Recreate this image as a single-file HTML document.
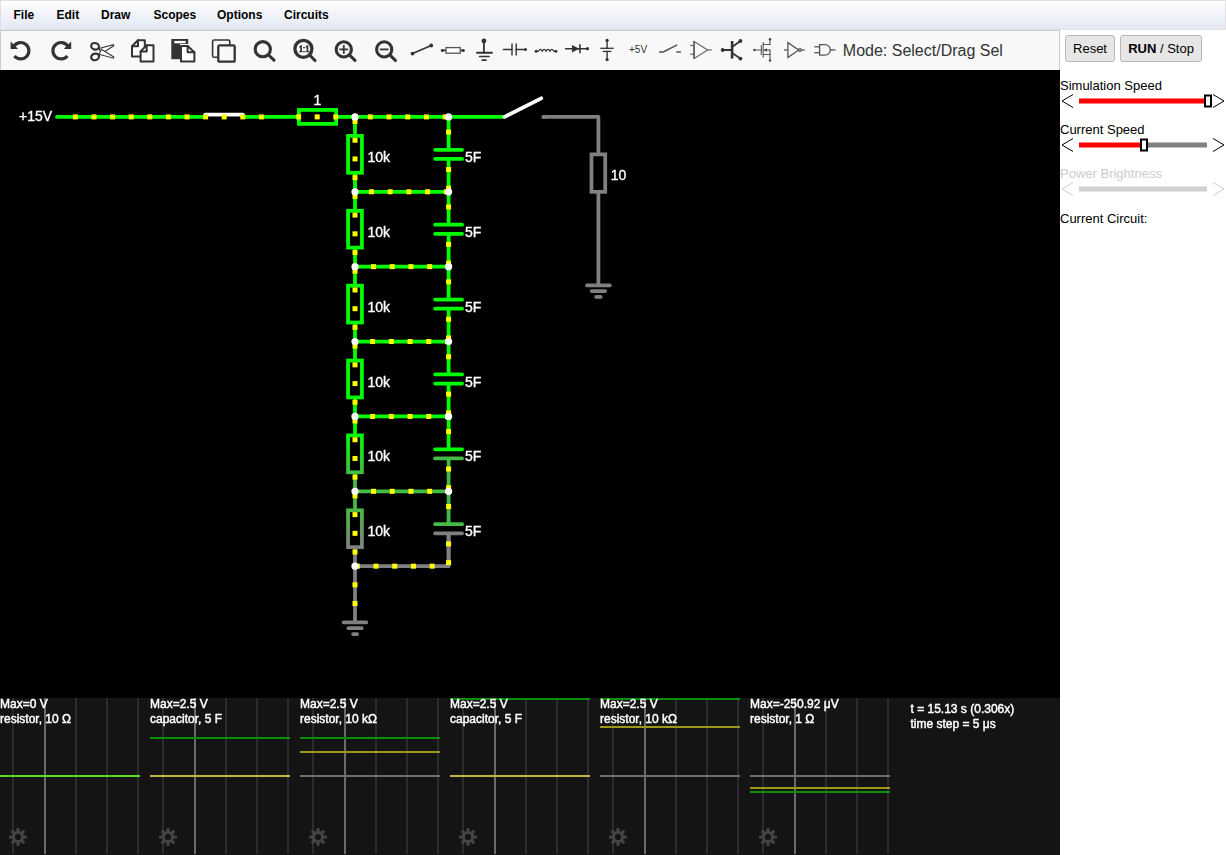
<!DOCTYPE html>
<html><head><meta charset="utf-8">
<style>
html,body{margin:0;padding:0;}
body{width:1226px;height:855px;overflow:hidden;position:relative;background:#fff;font-family:"Liberation Sans",sans-serif;}
#menu{position:absolute;left:0;top:0;width:1226px;height:30px;box-sizing:border-box;border:1px solid #e0e0e0;background:linear-gradient(#fefefe,#e3e8f3);}
#menu span{position:absolute;top:7px;font-size:12px;font-weight:bold;color:#000;line-height:14px;}
#toolbar{position:absolute;left:0;top:30px;width:1060px;height:40px;box-sizing:border-box;border:1px solid #cccccc;border-bottom:none;background:#f8f8f8;}
#canvas{position:absolute;left:0;top:70px;width:1060px;height:785px;background:#000;overflow:hidden;will-change:transform;}
#panel{position:absolute;left:1060px;top:30px;width:166px;height:825px;background:#fff;}
.btn{position:absolute;top:5px;height:27px;box-sizing:border-box;border:1px solid #b8b8b8;border-radius:3px;background:#e6e6e6;font-size:13px;color:#000;line-height:25px;text-align:center;}
.lbl{position:absolute;left:0px;font-size:13px;color:#000;line-height:15px;white-space:nowrap;}
</style></head><body>
<div id="menu">
<span style="left:12.5px">File</span><span style="left:55.5px">Edit</span><span style="left:100px">Draw</span><span style="left:152.5px">Scopes</span><span style="left:216px">Options</span><span style="left:283px">Circuits</span>
</div>
<div id="toolbar"><svg width="1060" height="40" style="position:absolute;left:-1px;top:-1px" font-family="Liberation Sans, sans-serif">
<g transform="translate(0,-30)" fill="none" stroke="#333" stroke-linecap="round">
<!-- undo -->
<g id="undo">
<path d="M14.0,46.0 A8.2,8.2 0 1 1 14.42,55.97" stroke-width="3.2" stroke-linecap="butt"/>
<polygon points="10.6,41.4 10.6,48.9 18.1,48.9" fill="#333" stroke="none"/>
</g>
<!-- redo -->
<g transform="translate(81.8,0) scale(-1,1)">
<path d="M14.0,46.0 A8.2,8.2 0 1 1 14.42,55.97" stroke-width="3.2" stroke-linecap="butt"/>
<polygon points="10.6,41.4 10.6,48.9 18.1,48.9" fill="#333" stroke="none"/>
</g>
<!-- scissors -->
<g stroke-width="2.2">
<ellipse cx="95.1" cy="46.3" rx="4" ry="3.2" transform="rotate(18 95.1 46.3)"/>
<ellipse cx="95.1" cy="56.9" rx="4" ry="3.2" transform="rotate(-18 95.1 56.9)"/>
</g>
<g stroke-width="1.1" fill="#fff">
<path d="M99,48.5 L113.4,44.6 L113.8,45.8 L101.5,53.6 Z"/>
<path d="M99,54.3 L113.4,58.2 L113.8,57 L101.5,49.2 Z"/>
</g>
<!-- copy -->
<g stroke-width="2" stroke-linejoin="round" fill="#fff">
<path d="M138,40.2 L144.8,40.2 L144.8,56.4 L132,56.4 L132,46.2 Z"/>
<path d="M132,46.2 L138,46.2 L138,40.2" fill="none"/>
<path d="M146.7,45.3 L153.5,45.3 L153.5,61.6 L140.6,61.6 L140.6,51.4 Z"/>
<path d="M140.6,51.4 L146.7,51.4 L146.7,45.3" fill="none"/>
</g>
<!-- paste -->
<g stroke-linejoin="round">
<rect x="171.3" y="39" width="16.9" height="20.2" fill="#333" stroke="none"/>
<rect x="174.3" y="40.9" width="11.4" height="2.4" fill="#fff" stroke="none"/>
<path d="M180,44 L188.5,44 L196,51.4 L196,63 L180,63 Z" fill="#fff" stroke="none"/>
<path d="M181,46 L187.6,46 L194.4,52.2 L194.4,61.6 L181,61.6 Z" fill="#fff" stroke="#333" stroke-width="2"/>
<path d="M187.6,46 L187.6,52.2 L194.4,52.2" stroke-width="2" fill="none"/>
</g>
<!-- duplicate -->
<g stroke-linejoin="round">
<rect x="212.6" y="40" width="17.2" height="17.2" rx="1.5" stroke-width="1.6"/>
<rect x="218.3" y="45.3" width="16.4" height="16.4" rx="1.5" stroke-width="2.3" fill="#f8f8f8"/>
</g>
<!-- search -->
<g stroke-width="3.1">
<circle cx="262.8" cy="49.2" r="7.6"/><line x1="268.6" y1="55" x2="274" y2="60.2"/>
<circle cx="303.4" cy="48.8" r="8.5" stroke-width="3.3"/><line x1="309.6" y1="55" x2="315" y2="60.5"/>
<circle cx="343.8" cy="49.4" r="7.6"/><line x1="349.6" y1="55.2" x2="355" y2="60.4"/>
<circle cx="384.2" cy="49.4" r="7.6"/><line x1="390" y1="55.2" x2="395.4" y2="60.4"/>
</g>
<g fill="#333" stroke="none">
<path d="M298.9,46.9 L300.6,45.3 L301.9,45.3 L301.9,51.3 L302.8,51.3 L302.8,52.3 L299.1,52.3 L299.1,51.3 L300.2,51.3 L300.2,47.1 L299.3,47.8 Z"/>
<circle cx="304" cy="47.6" r="0.85"/><circle cx="304" cy="51.5" r="0.85"/>
<path d="M305.3,46.9 L307,45.3 L308.3,45.3 L308.3,51.3 L309.2,51.3 L309.2,52.3 L305.5,52.3 L305.5,51.3 L306.6,51.3 L306.6,47.1 L305.7,47.8 Z"/>
</g>
<g stroke-width="1.8" stroke-linecap="butt">
<line x1="339.4" y1="49.4" x2="348.2" y2="49.4"/><line x1="343.8" y1="45" x2="343.8" y2="53.8"/>
<line x1="379.8" y1="49.4" x2="388.6" y2="49.4"/>
</g>
<!-- small component icons -->
<g stroke-width="1.6" fill="#333">
<!-- wire -->
<line x1="412.5" y1="53.6" x2="431.2" y2="45.5"/>
<circle cx="412.5" cy="53.6" r="1.9" stroke="none"/><circle cx="431.2" cy="45.5" r="1.9" stroke="none"/>
<!-- resistor -->
<line x1="442.3" y1="50.4" x2="445.8" y2="50.4"/><line x1="460.4" y1="50.4" x2="463.3" y2="50.4"/>
<rect x="446" y="47.6" width="14.2" height="5.6" fill="#fff" stroke="#555" stroke-width="1.3"/>
<circle cx="442.3" cy="50.4" r="1.5" stroke="none"/><circle cx="463.3" cy="50.4" r="1.5" stroke="none"/>
<!-- ground -->
<circle cx="483.9" cy="41" r="2.4" stroke="none"/>
<line x1="483.9" y1="41" x2="483.9" y2="52.8" stroke-width="1.8"/>
<line x1="477" y1="52.8" x2="492" y2="52.8" stroke-width="1.9"/>
<line x1="479.6" y1="56.5" x2="489" y2="56.5" stroke-width="1.7"/>
<line x1="482.3" y1="60.1" x2="486" y2="60.1" stroke-width="1.7"/>
<!-- capacitor -->
<line x1="503.5" y1="49.5" x2="512" y2="49.5"/><line x1="516.2" y1="49.5" x2="525.5" y2="49.5"/>
<line x1="512" y1="43.6" x2="512" y2="55.6" stroke-width="1.4" stroke-linecap="butt"/><line x1="516.2" y1="43.6" x2="516.2" y2="55.6" stroke-width="1.4" stroke-linecap="butt"/>
<circle cx="525.5" cy="49.5" r="1.5" stroke="none"/>
<!-- inductor -->
<path d="M536.1,51.2 L538.5,51.2 Q540.4,47.6 542.3,51.2 Q544.2,47.6 546.1,51.2 Q548,47.6 549.9,51.2 Q551.8,47.6 553.7,51.2 L555.9,51.2" fill="none" stroke-width="1.3"/>
<circle cx="536.1" cy="51.2" r="1.5" stroke="none"/><circle cx="555.9" cy="51.2" r="1.5" stroke="none"/>
<!-- diode -->
<line x1="565.5" y1="48.7" x2="587.5" y2="48.7" stroke-width="1.4"/>
<polygon points="572,45 572,52.6 579.2,48.7" stroke="none"/>
<line x1="579.9" y1="44.3" x2="579.9" y2="53.2" stroke-width="1.6" stroke-linecap="butt"/>
<circle cx="587.5" cy="48.7" r="1.6" stroke="none"/>
<!-- battery -->
<line x1="607.1" y1="40.3" x2="607.1" y2="48.3" stroke-width="1.4"/><line x1="607.1" y1="51.4" x2="607.1" y2="59.6" stroke-width="1.4"/>
<line x1="600.3" y1="48.3" x2="613.7" y2="48.3" stroke-width="1.3" stroke-linecap="butt"/>
<line x1="602.7" y1="51.4" x2="611.4" y2="51.4" stroke-width="1.3" stroke-linecap="butt"/>
<circle cx="607.1" cy="40.3" r="1.6" stroke="none"/><circle cx="607.1" cy="59.6" r="1.6" stroke="none"/>
</g>
<text x="629" y="52.8" font-size="10" fill="#333" stroke="none">+5V</text>
<g stroke="#555" stroke-width="1.5" stroke-linecap="butt">
<!-- switch -->
<line x1="659" y1="52" x2="663.4" y2="52"/><line x1="663.2" y1="52" x2="677.2" y2="44.9"/><line x1="676.3" y1="52" x2="680.9" y2="52"/>
</g>
<g stroke="#666" stroke-width="1.2" stroke-linecap="butt" fill="none">
<!-- opamp -->
<polygon points="694.2,41.5 694.2,58.4 707.6,49.9"/>
<line x1="690.1" y1="45.5" x2="694.2" y2="45.5"/><line x1="690.1" y1="54.2" x2="694.2" y2="54.2"/><line x1="707.6" y1="49.9" x2="711.8" y2="49.9"/>
<line x1="694" y1="41.2" x2="694" y2="58.6" stroke-width="1.8"/>
</g>
<g stroke="#333" fill="#333">
<!-- transistor -->
<line x1="722.6" y1="50" x2="732.1" y2="50" stroke-width="1.8"/>
<line x1="732.1" y1="41" x2="732.1" y2="58.6" stroke-width="2.6" stroke-linecap="butt"/>
<line x1="732.1" y1="47" x2="740.4" y2="41" stroke-width="1.8"/>
<line x1="732.1" y1="53" x2="740.4" y2="58.6" stroke-width="1.8"/>
<circle cx="722.6" cy="50" r="1.9" stroke="none"/><circle cx="740.4" cy="41" r="1.9" stroke="none"/><circle cx="740.4" cy="58.6" r="1.9" stroke="none"/>
<!-- mosfet -->
<g stroke-width="1.1" fill="none" stroke="#555">
<line x1="754.4" y1="50" x2="761.3" y2="50"/>
<line x1="761.3" y1="45.5" x2="761.3" y2="54.5"/>
<line x1="763.2" y1="42.6" x2="763.2" y2="57.2"/>
<line x1="763.2" y1="44.5" x2="770" y2="44.5"/><line x1="770" y1="44.5" x2="770" y2="39.3"/>
<line x1="763.2" y1="50" x2="770" y2="50"/>
<line x1="763.2" y1="54.5" x2="770" y2="54.5"/><line x1="770" y1="54.5" x2="770" y2="60.6"/>
<line x1="770" y1="50" x2="770" y2="54.5"/>
</g>
<circle cx="754.4" cy="50" r="1.2" stroke="none" fill="#444"/><circle cx="770" cy="39.3" r="1.2" stroke="none" fill="#444"/><circle cx="770" cy="60.6" r="1.2" stroke="none" fill="#444"/>
<polygon points="764,50 767,48.3 767,51.7" stroke="none" fill="#444"/>
</g>
<g stroke="#555" stroke-width="1.3" fill="none" stroke-linecap="butt">
<!-- inverter -->
<line x1="784" y1="50" x2="787.9" y2="50"/>
<polygon points="787.9,42.6 787.9,57.6 798.6,50"/>
<circle cx="799.9" cy="50" r="1.4"/>
<line x1="801.3" y1="50" x2="804.8" y2="50"/>
<!-- and -->
<line x1="814.3" y1="46.8" x2="819.6" y2="46.8"/><line x1="814.3" y1="52.7" x2="819.6" y2="52.7"/>
<path d="M819.6,44.6 L825,44.6 A5.3,5.3 0 0 1 825,55.2 L819.6,55.2 Z"/>
<line x1="830.3" y1="49.9" x2="835.5" y2="49.9"/>
</g>
<text x="842.8" y="55.6" font-size="16" fill="#333" stroke="none">Mode: Select/Drag Sel</text>
</g>
</svg>
</div>
<div id="canvas"><svg width="1060" height="628" viewBox="0 70 1060 628" style="position:absolute;left:0;top:0" font-family="Liberation Sans, sans-serif"><defs><linearGradient id="g4" gradientUnits="userSpaceOnUse" x1="0" y1="433.56" x2="0" y2="474.16"><stop offset="0" stop-color="#00ff00"/><stop offset="1" stop-color="#44bb44"/></linearGradient><linearGradient id="g5" gradientUnits="userSpaceOnUse" x1="0" y1="508.44" x2="0" y2="549.04"><stop offset="0" stop-color="#44bb44"/><stop offset="1" stop-color="#808080"/></linearGradient></defs><line x1="57.00" y1="116.90" x2="205.20" y2="116.90" stroke="#00ff00" stroke-width="3.75" stroke-linecap="round"/>
<line x1="242.80" y1="116.90" x2="298.90" y2="116.90" stroke="#00ff00" stroke-width="3.75" stroke-linecap="butt"/>
<rect x="298.88" y="109.93" width="37.25" height="13.95" fill="none" stroke="#00ff00" stroke-width="3.75"/>
<line x1="336.10" y1="116.90" x2="504.60" y2="116.90" stroke="#00ff00" stroke-width="3.75" stroke-linecap="butt"/>
<path d="M205.2,116.9 L205.2,114.5 L242.8,114.5 L242.8,116.9" fill="none" stroke="#fff" stroke-width="3.75" stroke-linejoin="round" stroke-linecap="round"/>
<line x1="504.60" y1="116.90" x2="541.20" y2="98.30" stroke="#ffffff" stroke-width="3.75" stroke-linecap="round"/>
<path d="M543.2,116.9 L598.4,116.9 L598.4,154.4" fill="none" stroke="#808080" stroke-width="3.75" stroke-linejoin="round" stroke-linecap="butt"/>
<line x1="543.20" y1="116.90" x2="545.00" y2="116.90" stroke="#808080" stroke-width="3.75" stroke-linecap="round"/>
<rect x="591.48" y="154.38" width="13.75" height="37.45" fill="none" stroke="#808080" stroke-width="3.75"/>
<line x1="598.40" y1="191.80" x2="598.40" y2="285.30" stroke="#808080" stroke-width="3.75" stroke-linecap="butt"/>
<line x1="587.00" y1="285.30" x2="609.80" y2="285.30" stroke="#808080" stroke-width="3.75" stroke-linecap="round"/>
<line x1="591.70" y1="291.10" x2="605.10" y2="291.10" stroke="#808080" stroke-width="3.75" stroke-linecap="round"/>
<line x1="596.20" y1="296.90" x2="600.60" y2="296.90" stroke="#808080" stroke-width="3.75" stroke-linecap="round"/>
<text x="610.80" y="180.00" font-size="14" fill="#fff" stroke="#fff" stroke-width="0.35" text-anchor="start">10</text>
<text x="317.50" y="104.70" font-size="14" fill="#fff" stroke="#fff" stroke-width="0.35" text-anchor="middle">1</text>
<text x="19.00" y="120.90" font-size="14" fill="#fff" stroke="#fff" stroke-width="0.35" text-anchor="start">+15V</text>
<line x1="355.00" y1="116.90" x2="355.00" y2="135.94" stroke="#00ff00" stroke-width="3.75" stroke-linecap="butt"/>
<line x1="355.00" y1="172.74" x2="355.00" y2="191.78" stroke="#00ff00" stroke-width="3.75" stroke-linecap="butt"/>
<rect x="348.07" y="135.91" width="13.85" height="36.85" fill="none" stroke="#00ff00" stroke-width="3.75"/>
<text x="367.50" y="161.94" font-size="14" fill="#fff" stroke="#fff" stroke-width="0.35" text-anchor="start">10k</text>
<line x1="448.60" y1="116.90" x2="448.60" y2="149.79" stroke="#00ff00" stroke-width="3.75" stroke-linecap="butt"/>
<line x1="448.60" y1="158.89" x2="448.60" y2="191.78" stroke="#00ff00" stroke-width="3.75" stroke-linecap="butt"/>
<line x1="435.10" y1="149.79" x2="462.10" y2="149.79" stroke="#00ff00" stroke-width="3.75" stroke-linecap="round"/>
<line x1="435.10" y1="158.89" x2="462.10" y2="158.89" stroke="#00ff00" stroke-width="3.75" stroke-linecap="round"/>
<text x="464.90" y="161.94" font-size="14" fill="#fff" stroke="#fff" stroke-width="0.35" text-anchor="start">5F</text>
<line x1="355.00" y1="191.78" x2="355.00" y2="210.82" stroke="#00ff00" stroke-width="3.75" stroke-linecap="butt"/>
<line x1="355.00" y1="247.62" x2="355.00" y2="266.66" stroke="#00ff00" stroke-width="3.75" stroke-linecap="butt"/>
<rect x="348.07" y="210.79" width="13.85" height="36.85" fill="none" stroke="#00ff00" stroke-width="3.75"/>
<text x="367.50" y="236.82" font-size="14" fill="#fff" stroke="#fff" stroke-width="0.35" text-anchor="start">10k</text>
<line x1="448.60" y1="191.78" x2="448.60" y2="224.67" stroke="#00ff00" stroke-width="3.75" stroke-linecap="butt"/>
<line x1="448.60" y1="233.77" x2="448.60" y2="266.66" stroke="#00ff00" stroke-width="3.75" stroke-linecap="butt"/>
<line x1="435.10" y1="224.67" x2="462.10" y2="224.67" stroke="#00ff00" stroke-width="3.75" stroke-linecap="round"/>
<line x1="435.10" y1="233.77" x2="462.10" y2="233.77" stroke="#00ff00" stroke-width="3.75" stroke-linecap="round"/>
<text x="464.90" y="236.82" font-size="14" fill="#fff" stroke="#fff" stroke-width="0.35" text-anchor="start">5F</text>
<line x1="355.00" y1="266.66" x2="355.00" y2="285.70" stroke="#00ff00" stroke-width="3.75" stroke-linecap="butt"/>
<line x1="355.00" y1="322.50" x2="355.00" y2="341.54" stroke="#00ff00" stroke-width="3.75" stroke-linecap="butt"/>
<rect x="348.07" y="285.67" width="13.85" height="36.85" fill="none" stroke="#00ff00" stroke-width="3.75"/>
<text x="367.50" y="311.70" font-size="14" fill="#fff" stroke="#fff" stroke-width="0.35" text-anchor="start">10k</text>
<line x1="448.60" y1="266.66" x2="448.60" y2="299.55" stroke="#00ff00" stroke-width="3.75" stroke-linecap="butt"/>
<line x1="448.60" y1="308.65" x2="448.60" y2="341.54" stroke="#00ff00" stroke-width="3.75" stroke-linecap="butt"/>
<line x1="435.10" y1="299.55" x2="462.10" y2="299.55" stroke="#00ff00" stroke-width="3.75" stroke-linecap="round"/>
<line x1="435.10" y1="308.65" x2="462.10" y2="308.65" stroke="#00ff00" stroke-width="3.75" stroke-linecap="round"/>
<text x="464.90" y="311.70" font-size="14" fill="#fff" stroke="#fff" stroke-width="0.35" text-anchor="start">5F</text>
<line x1="355.00" y1="341.54" x2="355.00" y2="360.58" stroke="#00ff00" stroke-width="3.75" stroke-linecap="butt"/>
<line x1="355.00" y1="397.38" x2="355.00" y2="416.42" stroke="#00ff00" stroke-width="3.75" stroke-linecap="butt"/>
<rect x="348.07" y="360.55" width="13.85" height="36.85" fill="none" stroke="#00ff00" stroke-width="3.75"/>
<text x="367.50" y="386.58" font-size="14" fill="#fff" stroke="#fff" stroke-width="0.35" text-anchor="start">10k</text>
<line x1="448.60" y1="341.54" x2="448.60" y2="374.43" stroke="#00ff00" stroke-width="3.75" stroke-linecap="butt"/>
<line x1="448.60" y1="383.53" x2="448.60" y2="416.42" stroke="#00ff00" stroke-width="3.75" stroke-linecap="butt"/>
<line x1="435.10" y1="374.43" x2="462.10" y2="374.43" stroke="#00ff00" stroke-width="3.75" stroke-linecap="round"/>
<line x1="435.10" y1="383.53" x2="462.10" y2="383.53" stroke="#00ff00" stroke-width="3.75" stroke-linecap="round"/>
<text x="464.90" y="386.58" font-size="14" fill="#fff" stroke="#fff" stroke-width="0.35" text-anchor="start">5F</text>
<line x1="355.00" y1="416.42" x2="355.00" y2="435.46" stroke="#00ff00" stroke-width="3.75" stroke-linecap="butt"/>
<line x1="355.00" y1="472.26" x2="355.00" y2="491.30" stroke="#44bb44" stroke-width="3.75" stroke-linecap="butt"/>
<rect x="348.07" y="435.43" width="13.85" height="36.85" fill="none" stroke="url(#g4)" stroke-width="3.75"/>
<text x="367.50" y="461.46" font-size="14" fill="#fff" stroke="#fff" stroke-width="0.35" text-anchor="start">10k</text>
<line x1="448.60" y1="416.42" x2="448.60" y2="449.31" stroke="#00ff00" stroke-width="3.75" stroke-linecap="butt"/>
<line x1="448.60" y1="458.41" x2="448.60" y2="491.30" stroke="#44bb44" stroke-width="3.75" stroke-linecap="butt"/>
<line x1="435.10" y1="449.31" x2="462.10" y2="449.31" stroke="#00ff00" stroke-width="3.75" stroke-linecap="round"/>
<line x1="435.10" y1="458.41" x2="462.10" y2="458.41" stroke="#44bb44" stroke-width="3.75" stroke-linecap="round"/>
<text x="464.90" y="461.46" font-size="14" fill="#fff" stroke="#fff" stroke-width="0.35" text-anchor="start">5F</text>
<line x1="355.00" y1="491.30" x2="355.00" y2="510.34" stroke="#44bb44" stroke-width="3.75" stroke-linecap="butt"/>
<line x1="355.00" y1="547.14" x2="355.00" y2="566.18" stroke="#808080" stroke-width="3.75" stroke-linecap="butt"/>
<rect x="348.07" y="510.31" width="13.85" height="36.85" fill="none" stroke="url(#g5)" stroke-width="3.75"/>
<text x="367.50" y="536.34" font-size="14" fill="#fff" stroke="#fff" stroke-width="0.35" text-anchor="start">10k</text>
<line x1="448.60" y1="491.30" x2="448.60" y2="524.19" stroke="#44bb44" stroke-width="3.75" stroke-linecap="butt"/>
<line x1="448.60" y1="533.29" x2="448.60" y2="566.18" stroke="#808080" stroke-width="3.75" stroke-linecap="butt"/>
<line x1="435.10" y1="524.19" x2="462.10" y2="524.19" stroke="#44bb44" stroke-width="3.75" stroke-linecap="round"/>
<line x1="435.10" y1="533.29" x2="462.10" y2="533.29" stroke="#808080" stroke-width="3.75" stroke-linecap="round"/>
<text x="464.90" y="536.34" font-size="14" fill="#fff" stroke="#fff" stroke-width="0.35" text-anchor="start">5F</text>
<line x1="355.00" y1="191.78" x2="448.60" y2="191.78" stroke="#00ff00" stroke-width="3.75" stroke-linecap="butt"/>
<line x1="355.00" y1="266.66" x2="448.60" y2="266.66" stroke="#00ff00" stroke-width="3.75" stroke-linecap="butt"/>
<line x1="355.00" y1="341.54" x2="448.60" y2="341.54" stroke="#00ff00" stroke-width="3.75" stroke-linecap="butt"/>
<line x1="355.00" y1="416.42" x2="448.60" y2="416.42" stroke="#00ff00" stroke-width="3.75" stroke-linecap="butt"/>
<line x1="355.00" y1="491.30" x2="448.60" y2="491.30" stroke="#44bb44" stroke-width="3.75" stroke-linecap="butt"/>
<path d="M355.0,566.18 L448.6,566.18 L448.6,533.29" fill="none" stroke="#808080" stroke-width="3.75" stroke-linejoin="round"/>
<line x1="355.00" y1="566.18" x2="355.00" y2="622.40" stroke="#808080" stroke-width="3.75" stroke-linecap="butt"/>
<line x1="343.70" y1="622.40" x2="366.30" y2="622.40" stroke="#808080" stroke-width="3.75" stroke-linecap="round"/>
<line x1="348.40" y1="628.20" x2="361.70" y2="628.20" stroke="#808080" stroke-width="3.75" stroke-linecap="round"/>
<line x1="353.10" y1="634.00" x2="357.10" y2="634.00" stroke="#808080" stroke-width="3.75" stroke-linecap="round"/>
<rect x="72.90" y="114.40" width="5" height="5" fill="#ffff00"/>
<rect x="91.50" y="114.40" width="5" height="5" fill="#ffff00"/>
<rect x="110.10" y="114.40" width="5" height="5" fill="#ffff00"/>
<rect x="128.70" y="114.40" width="5" height="5" fill="#ffff00"/>
<rect x="147.30" y="114.40" width="5" height="5" fill="#ffff00"/>
<rect x="165.90" y="114.40" width="5" height="5" fill="#ffff00"/>
<rect x="184.50" y="114.40" width="5" height="5" fill="#ffff00"/>
<rect x="203.10" y="114.40" width="5" height="5" fill="#ffff00"/>
<rect x="221.70" y="114.40" width="5" height="5" fill="#ffff00"/>
<rect x="240.30" y="114.40" width="5" height="5" fill="#ffff00"/>
<rect x="258.90" y="114.40" width="5" height="5" fill="#ffff00"/>
<rect x="296.10" y="114.40" width="5" height="5" fill="#ffff00"/>
<rect x="314.70" y="114.40" width="5" height="5" fill="#ffff00"/>
<rect x="333.30" y="114.40" width="5" height="5" fill="#ffff00"/>
<rect x="367.80" y="114.40" width="5" height="5" fill="#ffff00"/>
<rect x="386.52" y="114.40" width="5" height="5" fill="#ffff00"/>
<rect x="405.24" y="114.40" width="5" height="5" fill="#ffff00"/>
<rect x="423.96" y="114.40" width="5" height="5" fill="#ffff00"/>
<rect x="442.68" y="114.40" width="5" height="5" fill="#ffff00"/>
<rect x="368.90" y="189.28" width="5" height="5" fill="#ffff00"/>
<rect x="387.62" y="189.28" width="5" height="5" fill="#ffff00"/>
<rect x="406.34" y="189.28" width="5" height="5" fill="#ffff00"/>
<rect x="425.06" y="189.28" width="5" height="5" fill="#ffff00"/>
<rect x="443.78" y="189.28" width="5" height="5" fill="#ffff00"/>
<rect x="371.00" y="264.16" width="5" height="5" fill="#ffff00"/>
<rect x="389.72" y="264.16" width="5" height="5" fill="#ffff00"/>
<rect x="408.44" y="264.16" width="5" height="5" fill="#ffff00"/>
<rect x="427.16" y="264.16" width="5" height="5" fill="#ffff00"/>
<rect x="445.88" y="264.16" width="5" height="5" fill="#ffff00"/>
<rect x="370.10" y="339.04" width="5" height="5" fill="#ffff00"/>
<rect x="388.82" y="339.04" width="5" height="5" fill="#ffff00"/>
<rect x="407.54" y="339.04" width="5" height="5" fill="#ffff00"/>
<rect x="426.26" y="339.04" width="5" height="5" fill="#ffff00"/>
<rect x="444.98" y="339.04" width="5" height="5" fill="#ffff00"/>
<rect x="370.10" y="413.92" width="5" height="5" fill="#ffff00"/>
<rect x="388.82" y="413.92" width="5" height="5" fill="#ffff00"/>
<rect x="407.54" y="413.92" width="5" height="5" fill="#ffff00"/>
<rect x="426.26" y="413.92" width="5" height="5" fill="#ffff00"/>
<rect x="444.98" y="413.92" width="5" height="5" fill="#ffff00"/>
<rect x="371.00" y="488.80" width="5" height="5" fill="#ffff00"/>
<rect x="389.72" y="488.80" width="5" height="5" fill="#ffff00"/>
<rect x="408.44" y="488.80" width="5" height="5" fill="#ffff00"/>
<rect x="427.16" y="488.80" width="5" height="5" fill="#ffff00"/>
<rect x="445.88" y="488.80" width="5" height="5" fill="#ffff00"/>
<rect x="354.80" y="563.68" width="5" height="5" fill="#ffff00"/>
<rect x="373.52" y="563.68" width="5" height="5" fill="#ffff00"/>
<rect x="392.24" y="563.68" width="5" height="5" fill="#ffff00"/>
<rect x="410.96" y="563.68" width="5" height="5" fill="#ffff00"/>
<rect x="429.68" y="563.68" width="5" height="5" fill="#ffff00"/>
<rect x="352.50" y="119.00" width="5" height="5" fill="#ffff00"/>
<rect x="352.50" y="137.72" width="5" height="5" fill="#ffff00"/>
<rect x="352.50" y="156.44" width="5" height="5" fill="#ffff00"/>
<rect x="352.50" y="175.16" width="5" height="5" fill="#ffff00"/>
<rect x="446.10" y="129.60" width="5" height="5" fill="#ffff00"/>
<rect x="446.10" y="167.00" width="5" height="5" fill="#ffff00"/>
<rect x="446.10" y="185.70" width="5" height="5" fill="#ffff00"/>
<rect x="352.50" y="193.88" width="5" height="5" fill="#ffff00"/>
<rect x="352.50" y="212.60" width="5" height="5" fill="#ffff00"/>
<rect x="352.50" y="231.32" width="5" height="5" fill="#ffff00"/>
<rect x="352.50" y="250.04" width="5" height="5" fill="#ffff00"/>
<rect x="446.10" y="204.48" width="5" height="5" fill="#ffff00"/>
<rect x="446.10" y="241.88" width="5" height="5" fill="#ffff00"/>
<rect x="446.10" y="260.58" width="5" height="5" fill="#ffff00"/>
<rect x="352.50" y="268.76" width="5" height="5" fill="#ffff00"/>
<rect x="352.50" y="287.48" width="5" height="5" fill="#ffff00"/>
<rect x="352.50" y="306.20" width="5" height="5" fill="#ffff00"/>
<rect x="352.50" y="324.92" width="5" height="5" fill="#ffff00"/>
<rect x="446.10" y="279.36" width="5" height="5" fill="#ffff00"/>
<rect x="446.10" y="316.76" width="5" height="5" fill="#ffff00"/>
<rect x="446.10" y="335.46" width="5" height="5" fill="#ffff00"/>
<rect x="352.50" y="343.64" width="5" height="5" fill="#ffff00"/>
<rect x="352.50" y="362.36" width="5" height="5" fill="#ffff00"/>
<rect x="352.50" y="381.08" width="5" height="5" fill="#ffff00"/>
<rect x="352.50" y="399.80" width="5" height="5" fill="#ffff00"/>
<rect x="446.10" y="354.24" width="5" height="5" fill="#ffff00"/>
<rect x="446.10" y="391.64" width="5" height="5" fill="#ffff00"/>
<rect x="446.10" y="410.34" width="5" height="5" fill="#ffff00"/>
<rect x="352.50" y="418.52" width="5" height="5" fill="#ffff00"/>
<rect x="352.50" y="437.24" width="5" height="5" fill="#ffff00"/>
<rect x="352.50" y="455.96" width="5" height="5" fill="#ffff00"/>
<rect x="352.50" y="474.68" width="5" height="5" fill="#ffff00"/>
<rect x="446.10" y="429.12" width="5" height="5" fill="#ffff00"/>
<rect x="446.10" y="466.52" width="5" height="5" fill="#ffff00"/>
<rect x="446.10" y="485.22" width="5" height="5" fill="#ffff00"/>
<rect x="352.50" y="493.40" width="5" height="5" fill="#ffff00"/>
<rect x="352.50" y="512.12" width="5" height="5" fill="#ffff00"/>
<rect x="352.50" y="530.84" width="5" height="5" fill="#ffff00"/>
<rect x="352.50" y="549.56" width="5" height="5" fill="#ffff00"/>
<rect x="446.10" y="504.00" width="5" height="5" fill="#ffff00"/>
<rect x="446.10" y="541.40" width="5" height="5" fill="#ffff00"/>
<rect x="446.10" y="560.10" width="5" height="5" fill="#ffff00"/>
<rect x="352.50" y="582.30" width="5" height="5" fill="#ffff00"/>
<rect x="352.50" y="601.00" width="5" height="5" fill="#ffff00"/>
<circle cx="355.00" cy="116.90" r="3.6" fill="#fff"/>
<circle cx="355.00" cy="191.78" r="3.6" fill="#fff"/>
<circle cx="355.00" cy="266.66" r="3.6" fill="#fff"/>
<circle cx="355.00" cy="341.54" r="3.6" fill="#fff"/>
<circle cx="355.00" cy="416.42" r="3.6" fill="#fff"/>
<circle cx="355.00" cy="491.30" r="3.6" fill="#fff"/>
<circle cx="355.00" cy="566.18" r="3.6" fill="#fff"/>
<circle cx="448.60" cy="116.90" r="3.6" fill="#fff"/>
<circle cx="448.60" cy="191.78" r="3.6" fill="#fff"/>
<circle cx="448.60" cy="266.66" r="3.6" fill="#fff"/>
<circle cx="448.60" cy="341.54" r="3.6" fill="#fff"/>
<circle cx="448.60" cy="416.42" r="3.6" fill="#fff"/>
<circle cx="448.60" cy="491.30" r="3.6" fill="#fff"/></svg><svg width="1060" height="157" style="position:absolute;left:0;top:628px" font-family="Liberation Sans, sans-serif"><rect x="0" y="0" width="1060" height="157" fill="#141414"/><rect x="12" y="0" width="2" height="156" fill="#2c2c2c"/><rect x="44" y="0" width="2" height="156" fill="#6a6a6a"/><rect x="75" y="0" width="2" height="156" fill="#2c2c2c"/><rect x="106" y="0" width="2" height="156" fill="#2c2c2c"/><rect x="137" y="0" width="2" height="156" fill="#2c2c2c"/><rect x="162" y="0" width="2" height="156" fill="#2c2c2c"/><rect x="194" y="0" width="2" height="156" fill="#6a6a6a"/><rect x="225" y="0" width="2" height="156" fill="#2c2c2c"/><rect x="256" y="0" width="2" height="156" fill="#2c2c2c"/><rect x="287" y="0" width="2" height="156" fill="#2c2c2c"/><rect x="312" y="0" width="2" height="156" fill="#2c2c2c"/><rect x="344" y="0" width="2" height="156" fill="#6a6a6a"/><rect x="375" y="0" width="2" height="156" fill="#2c2c2c"/><rect x="406" y="0" width="2" height="156" fill="#2c2c2c"/><rect x="437" y="0" width="2" height="156" fill="#2c2c2c"/><rect x="462" y="0" width="2" height="156" fill="#2c2c2c"/><rect x="494" y="0" width="2" height="156" fill="#6a6a6a"/><rect x="525" y="0" width="2" height="156" fill="#2c2c2c"/><rect x="556" y="0" width="2" height="156" fill="#2c2c2c"/><rect x="587" y="0" width="2" height="156" fill="#2c2c2c"/><rect x="612" y="0" width="2" height="156" fill="#2c2c2c"/><rect x="644" y="0" width="2" height="156" fill="#6a6a6a"/><rect x="675" y="0" width="2" height="156" fill="#2c2c2c"/><rect x="706" y="0" width="2" height="156" fill="#2c2c2c"/><rect x="737" y="0" width="2" height="156" fill="#2c2c2c"/><rect x="762" y="0" width="2" height="156" fill="#2c2c2c"/><rect x="794" y="0" width="2" height="156" fill="#6a6a6a"/><rect x="825" y="0" width="2" height="156" fill="#2c2c2c"/><rect x="856" y="0" width="2" height="156" fill="#2c2c2c"/><rect x="887" y="0" width="2" height="156" fill="#2c2c2c"/><rect x="0" y="77" width="140" height="2" fill="#55dd22"/><rect x="150" y="39" width="140" height="2" fill="#0a8f0a"/><rect x="150" y="77" width="140" height="2" fill="#c0b840"/><rect x="300" y="39" width="140" height="2" fill="#0a8f0a"/><rect x="300" y="53" width="140" height="2" fill="#9c9818"/><rect x="300" y="77" width="140" height="2" fill="#6e6e6e"/><rect x="450" y="0" width="140" height="2" fill="#0a8f0a"/><rect x="450" y="77" width="140" height="2" fill="#c0b840"/><rect x="600" y="0" width="140" height="2" fill="#0a8f0a"/><rect x="600" y="28" width="140" height="2" fill="#9c9818"/><rect x="600" y="77" width="140" height="2" fill="#6e6e6e"/><rect x="750" y="77" width="140" height="2" fill="#6e6e6e"/><rect x="750" y="89" width="140" height="2" fill="#9c9818"/><rect x="750" y="93" width="140" height="2" fill="#0a8f0a"/><text x="0" y="9.799999999999955" font-size="12" fill="#fff" stroke="#fff" stroke-width="0.45">Max=0 V</text><text x="0" y="25" font-size="12" fill="#fff" stroke="#fff" stroke-width="0.45">resistor, 10 Ω</text><rect x="16.4" y="130" width="3.2" height="5" rx="1.2" fill="#444" transform="rotate(0 18 139)"/><rect x="16.4" y="130" width="3.2" height="5" rx="1.2" fill="#444" transform="rotate(45 18 139)"/><rect x="16.4" y="130" width="3.2" height="5" rx="1.2" fill="#444" transform="rotate(90 18 139)"/><rect x="16.4" y="130" width="3.2" height="5" rx="1.2" fill="#444" transform="rotate(135 18 139)"/><rect x="16.4" y="130" width="3.2" height="5" rx="1.2" fill="#444" transform="rotate(180 18 139)"/><rect x="16.4" y="130" width="3.2" height="5" rx="1.2" fill="#444" transform="rotate(225 18 139)"/><rect x="16.4" y="130" width="3.2" height="5" rx="1.2" fill="#444" transform="rotate(270 18 139)"/><rect x="16.4" y="130" width="3.2" height="5" rx="1.2" fill="#444" transform="rotate(315 18 139)"/><circle cx="18" cy="139" r="4.6" fill="none" stroke="#444" stroke-width="3"/><text x="150" y="9.799999999999955" font-size="12" fill="#fff" stroke="#fff" stroke-width="0.45">Max=2.5 V</text><text x="150" y="25" font-size="12" fill="#fff" stroke="#fff" stroke-width="0.45">capacitor, 5 F</text><rect x="166.4" y="130" width="3.2" height="5" rx="1.2" fill="#444" transform="rotate(0 168 139)"/><rect x="166.4" y="130" width="3.2" height="5" rx="1.2" fill="#444" transform="rotate(45 168 139)"/><rect x="166.4" y="130" width="3.2" height="5" rx="1.2" fill="#444" transform="rotate(90 168 139)"/><rect x="166.4" y="130" width="3.2" height="5" rx="1.2" fill="#444" transform="rotate(135 168 139)"/><rect x="166.4" y="130" width="3.2" height="5" rx="1.2" fill="#444" transform="rotate(180 168 139)"/><rect x="166.4" y="130" width="3.2" height="5" rx="1.2" fill="#444" transform="rotate(225 168 139)"/><rect x="166.4" y="130" width="3.2" height="5" rx="1.2" fill="#444" transform="rotate(270 168 139)"/><rect x="166.4" y="130" width="3.2" height="5" rx="1.2" fill="#444" transform="rotate(315 168 139)"/><circle cx="168" cy="139" r="4.6" fill="none" stroke="#444" stroke-width="3"/><text x="300" y="9.799999999999955" font-size="12" fill="#fff" stroke="#fff" stroke-width="0.45">Max=2.5 V</text><text x="300" y="25" font-size="12" fill="#fff" stroke="#fff" stroke-width="0.45">resistor, 10 kΩ</text><rect x="316.4" y="130" width="3.2" height="5" rx="1.2" fill="#444" transform="rotate(0 318 139)"/><rect x="316.4" y="130" width="3.2" height="5" rx="1.2" fill="#444" transform="rotate(45 318 139)"/><rect x="316.4" y="130" width="3.2" height="5" rx="1.2" fill="#444" transform="rotate(90 318 139)"/><rect x="316.4" y="130" width="3.2" height="5" rx="1.2" fill="#444" transform="rotate(135 318 139)"/><rect x="316.4" y="130" width="3.2" height="5" rx="1.2" fill="#444" transform="rotate(180 318 139)"/><rect x="316.4" y="130" width="3.2" height="5" rx="1.2" fill="#444" transform="rotate(225 318 139)"/><rect x="316.4" y="130" width="3.2" height="5" rx="1.2" fill="#444" transform="rotate(270 318 139)"/><rect x="316.4" y="130" width="3.2" height="5" rx="1.2" fill="#444" transform="rotate(315 318 139)"/><circle cx="318" cy="139" r="4.6" fill="none" stroke="#444" stroke-width="3"/><text x="450" y="9.799999999999955" font-size="12" fill="#fff" stroke="#fff" stroke-width="0.45">Max=2.5 V</text><text x="450" y="25" font-size="12" fill="#fff" stroke="#fff" stroke-width="0.45">capacitor, 5 F</text><rect x="466.4" y="130" width="3.2" height="5" rx="1.2" fill="#444" transform="rotate(0 468 139)"/><rect x="466.4" y="130" width="3.2" height="5" rx="1.2" fill="#444" transform="rotate(45 468 139)"/><rect x="466.4" y="130" width="3.2" height="5" rx="1.2" fill="#444" transform="rotate(90 468 139)"/><rect x="466.4" y="130" width="3.2" height="5" rx="1.2" fill="#444" transform="rotate(135 468 139)"/><rect x="466.4" y="130" width="3.2" height="5" rx="1.2" fill="#444" transform="rotate(180 468 139)"/><rect x="466.4" y="130" width="3.2" height="5" rx="1.2" fill="#444" transform="rotate(225 468 139)"/><rect x="466.4" y="130" width="3.2" height="5" rx="1.2" fill="#444" transform="rotate(270 468 139)"/><rect x="466.4" y="130" width="3.2" height="5" rx="1.2" fill="#444" transform="rotate(315 468 139)"/><circle cx="468" cy="139" r="4.6" fill="none" stroke="#444" stroke-width="3"/><text x="600" y="9.799999999999955" font-size="12" fill="#fff" stroke="#fff" stroke-width="0.45">Max=2.5 V</text><text x="600" y="25" font-size="12" fill="#fff" stroke="#fff" stroke-width="0.45">resistor, 10 kΩ</text><rect x="616.4" y="130" width="3.2" height="5" rx="1.2" fill="#444" transform="rotate(0 618 139)"/><rect x="616.4" y="130" width="3.2" height="5" rx="1.2" fill="#444" transform="rotate(45 618 139)"/><rect x="616.4" y="130" width="3.2" height="5" rx="1.2" fill="#444" transform="rotate(90 618 139)"/><rect x="616.4" y="130" width="3.2" height="5" rx="1.2" fill="#444" transform="rotate(135 618 139)"/><rect x="616.4" y="130" width="3.2" height="5" rx="1.2" fill="#444" transform="rotate(180 618 139)"/><rect x="616.4" y="130" width="3.2" height="5" rx="1.2" fill="#444" transform="rotate(225 618 139)"/><rect x="616.4" y="130" width="3.2" height="5" rx="1.2" fill="#444" transform="rotate(270 618 139)"/><rect x="616.4" y="130" width="3.2" height="5" rx="1.2" fill="#444" transform="rotate(315 618 139)"/><circle cx="618" cy="139" r="4.6" fill="none" stroke="#444" stroke-width="3"/><text x="750" y="9.799999999999955" font-size="12" fill="#fff" stroke="#fff" stroke-width="0.45">Max=-250.92 μV</text><text x="750" y="25" font-size="12" fill="#fff" stroke="#fff" stroke-width="0.45">resistor, 1 Ω</text><rect x="766.4" y="130" width="3.2" height="5" rx="1.2" fill="#444" transform="rotate(0 768 139)"/><rect x="766.4" y="130" width="3.2" height="5" rx="1.2" fill="#444" transform="rotate(45 768 139)"/><rect x="766.4" y="130" width="3.2" height="5" rx="1.2" fill="#444" transform="rotate(90 768 139)"/><rect x="766.4" y="130" width="3.2" height="5" rx="1.2" fill="#444" transform="rotate(135 768 139)"/><rect x="766.4" y="130" width="3.2" height="5" rx="1.2" fill="#444" transform="rotate(180 768 139)"/><rect x="766.4" y="130" width="3.2" height="5" rx="1.2" fill="#444" transform="rotate(225 768 139)"/><rect x="766.4" y="130" width="3.2" height="5" rx="1.2" fill="#444" transform="rotate(270 768 139)"/><rect x="766.4" y="130" width="3.2" height="5" rx="1.2" fill="#444" transform="rotate(315 768 139)"/><circle cx="768" cy="139" r="4.6" fill="none" stroke="#444" stroke-width="3"/><text x="910.5" y="15.200000000000045" font-size="12" fill="#fff" stroke="#fff" stroke-width="0.45">t = 15.13 s (0.306x)</text><text x="910.5" y="29.600000000000023" font-size="12" fill="#fff" stroke="#fff" stroke-width="0.45">time step = 5 μs</text></svg></div>
<div id="panel">
<div class="btn" style="left:5px;width:50px">Reset</div>
<div class="btn" style="left:60px;width:82px"><b>RUN</b> / Stop</div>
<div class="lbl" style="top:48px">Simulation Speed</div>
<svg style="position:absolute;left:0;top:62px" width="166" height="16"><polyline points="13,2.5 2,9 13,15.5" fill="none" stroke="#000" stroke-width="1"/><rect x="19" y="6.5" width="126" height="5" fill="#ff0000"/><rect x="145" y="3.5" width="6" height="11" fill="#fff" stroke="#000" stroke-width="2"/><polyline points="153,2.5 164,9 153,15.5" fill="none" stroke="#000" stroke-width="1"/></svg>
<div class="lbl" style="top:92px">Current Speed</div>
<svg style="position:absolute;left:0;top:106px" width="166" height="16"><polyline points="13,2.5 2,9 13,15.5" fill="none" stroke="#000" stroke-width="1"/><rect x="19" y="6.5" width="62" height="5" fill="#ff0000"/><rect x="81" y="6.5" width="66" height="5" fill="#808080"/><rect x="81" y="3.5" width="6" height="11" fill="#fff" stroke="#000" stroke-width="2"/><polyline points="153,2.5 164,9 153,15.5" fill="none" stroke="#000" stroke-width="1"/></svg>
<div class="lbl" style="top:136px;color:#cccccc">Power Brightness</div>
<svg style="position:absolute;left:0;top:150px" width="166" height="16"><polyline points="13,2.5 2,9 13,15.5" fill="none" stroke="#cccccc" stroke-width="1"/><rect x="19" y="6.5" width="128" height="5" fill="#d0d0d0"/><polyline points="153,2.5 164,9 153,15.5" fill="none" stroke="#cccccc" stroke-width="1"/></svg>
<div class="lbl" style="top:181px">Current Circuit:</div>
</div>
</body></html>
